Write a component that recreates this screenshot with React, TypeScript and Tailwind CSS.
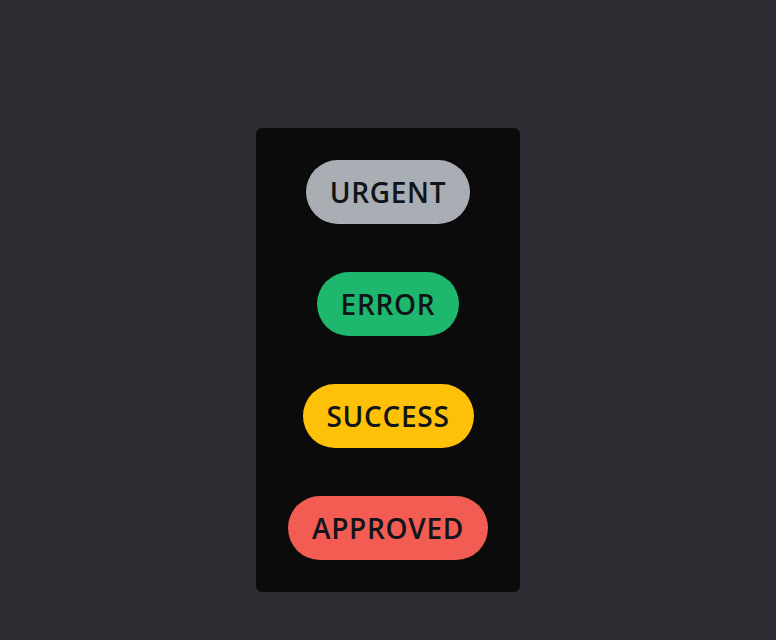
const badges = [
  { label: 'URGENT', className: 'bg-[#a9aeb5]' },
  { label: 'ERROR', className: 'bg-[#1db86d]' },
  { label: 'SUCCESS', className: 'bg-[#ffc107]' },
  { label: 'APPROVED', className: 'bg-[#f25c52]' },
];

export default function App() {
  return (
    <div className="min-h-screen bg-[#2b2d33] flex justify-center pt-32" style={{ fontFamily: '"Open Sans", "Noto Sans", sans-serif' }}>
      <div className="self-start flex flex-col items-center gap-12 p-8 rounded-md bg-[#0b0b0b]">
        {badges.map((b) => (
          <span
            key={b.label}
            className={`px-6 py-4 rounded-full text-[28px] leading-8 font-semibold tracking-wide text-[#111418] ${b.className}`}
          >
            {b.label}
          </span>
        ))}
      </div>
    </div>
  );
}
